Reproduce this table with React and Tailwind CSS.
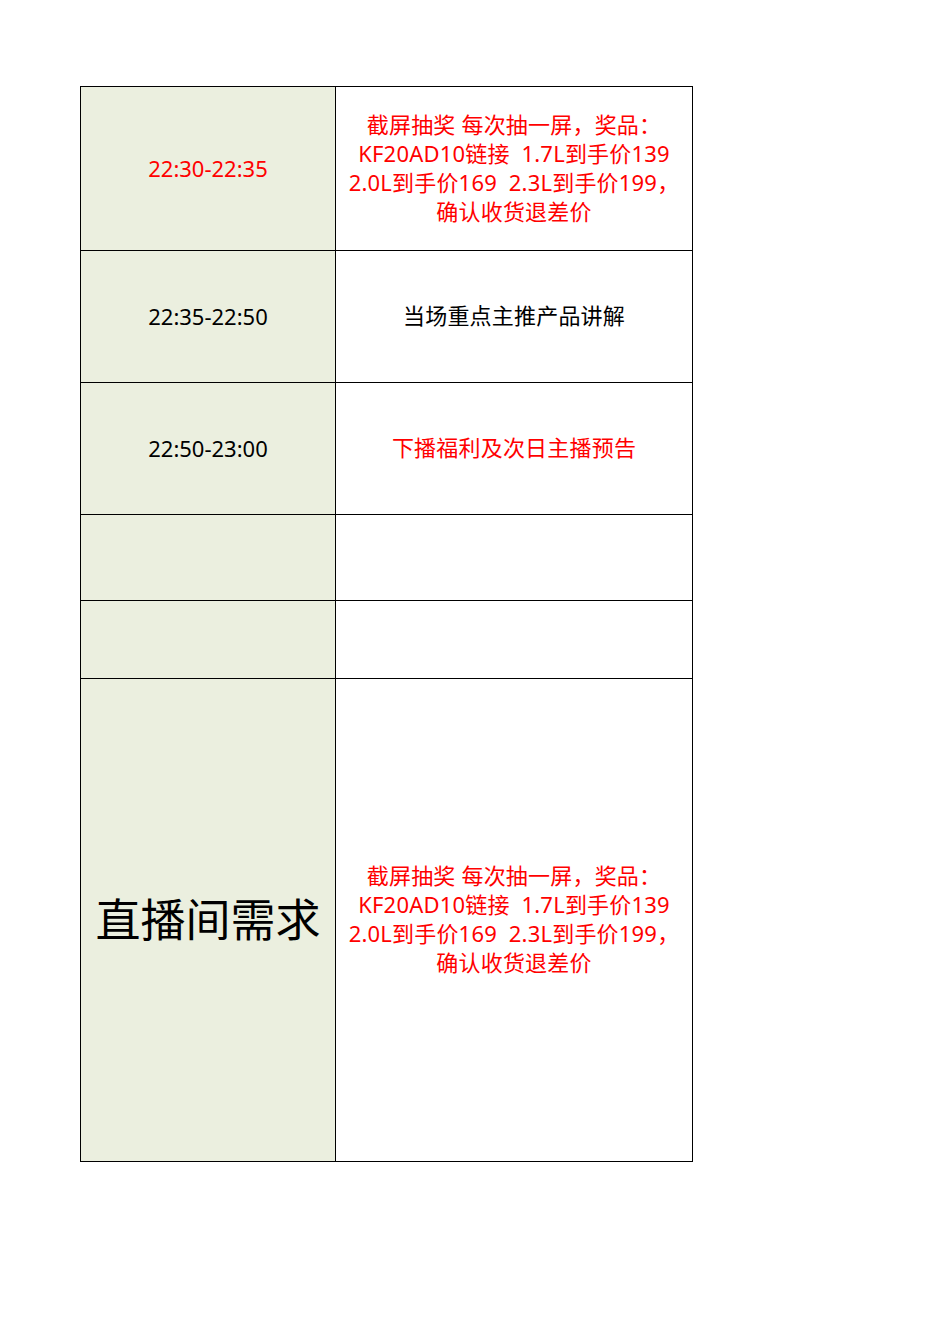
const prize = [
    "截屏抽奖 每次抽一屏，奖品：",
    "KF20AD10链接  1.7L到手价139",
    "2.0L到手价169  2.3L到手价199，",
    "确认收货退差价",
];

const rows = [
    { time: "22:30-22:35", timeRed: true, lines: prize, red: true, h: "h-[164px]" },
    { time: "22:35-22:50", lines: ["当场重点主推产品讲解"], h: "h-[132px]" },
    { time: "22:50-23:00", lines: ["下播福利及次日主播预告"], red: true, h: "h-[132px]" },
    { time: "", lines: [], h: "h-[86px]" },
    { time: "", lines: [], h: "h-[78px]" },
];

const App = () => {
    return (
        <div className="min-h-[1344px] w-[950px] bg-white pt-[86px] pl-[80px] font-['Noto_Sans','Noto_Sans_CJK_SC',sans-serif]">
            <div className="grid w-[613px] grid-cols-[255px_357px] border-t border-l border-black">
                {rows.map((row, i) => (
                    <div key={i} className="contents">
                        <div
                            className={`flex items-center justify-center border-r border-b border-black bg-[#ebefdf] text-[22px] ${row.h} ${row.timeRed ? "text-[#ff0000]" : "text-black"}`}
                        >
                            {row.time}
                        </div>
                        <div
                            className={`flex flex-col items-center justify-center border-r border-b border-black pb-[2px] text-center text-[22px] leading-[29px] tracking-[0.2px] whitespace-pre ${row.h} ${row.red ? "text-[#ff0000]" : "text-black"}`}
                        >
                            {row.lines.map((l) => (
                                <span key={l}>{l}</span>
                            ))}
                        </div>
                    </div>
                ))}

                {/* 直播间需求 */}
                <div className="flex h-[483px] items-center justify-center border-r border-b border-black bg-[#ebefdf] text-[45px] text-black">
                    直播间需求
                </div>
                <div className="flex h-[483px] flex-col items-center justify-center border-r border-b border-black pb-[2px] text-center text-[22px] leading-[29px] tracking-[0.2px] whitespace-pre text-[#ff0000]">
                    {prize.map((l) => (
                        <span key={l}>{l}</span>
                    ))}
                </div>
            </div>
        </div>
    );
};

export default App;
